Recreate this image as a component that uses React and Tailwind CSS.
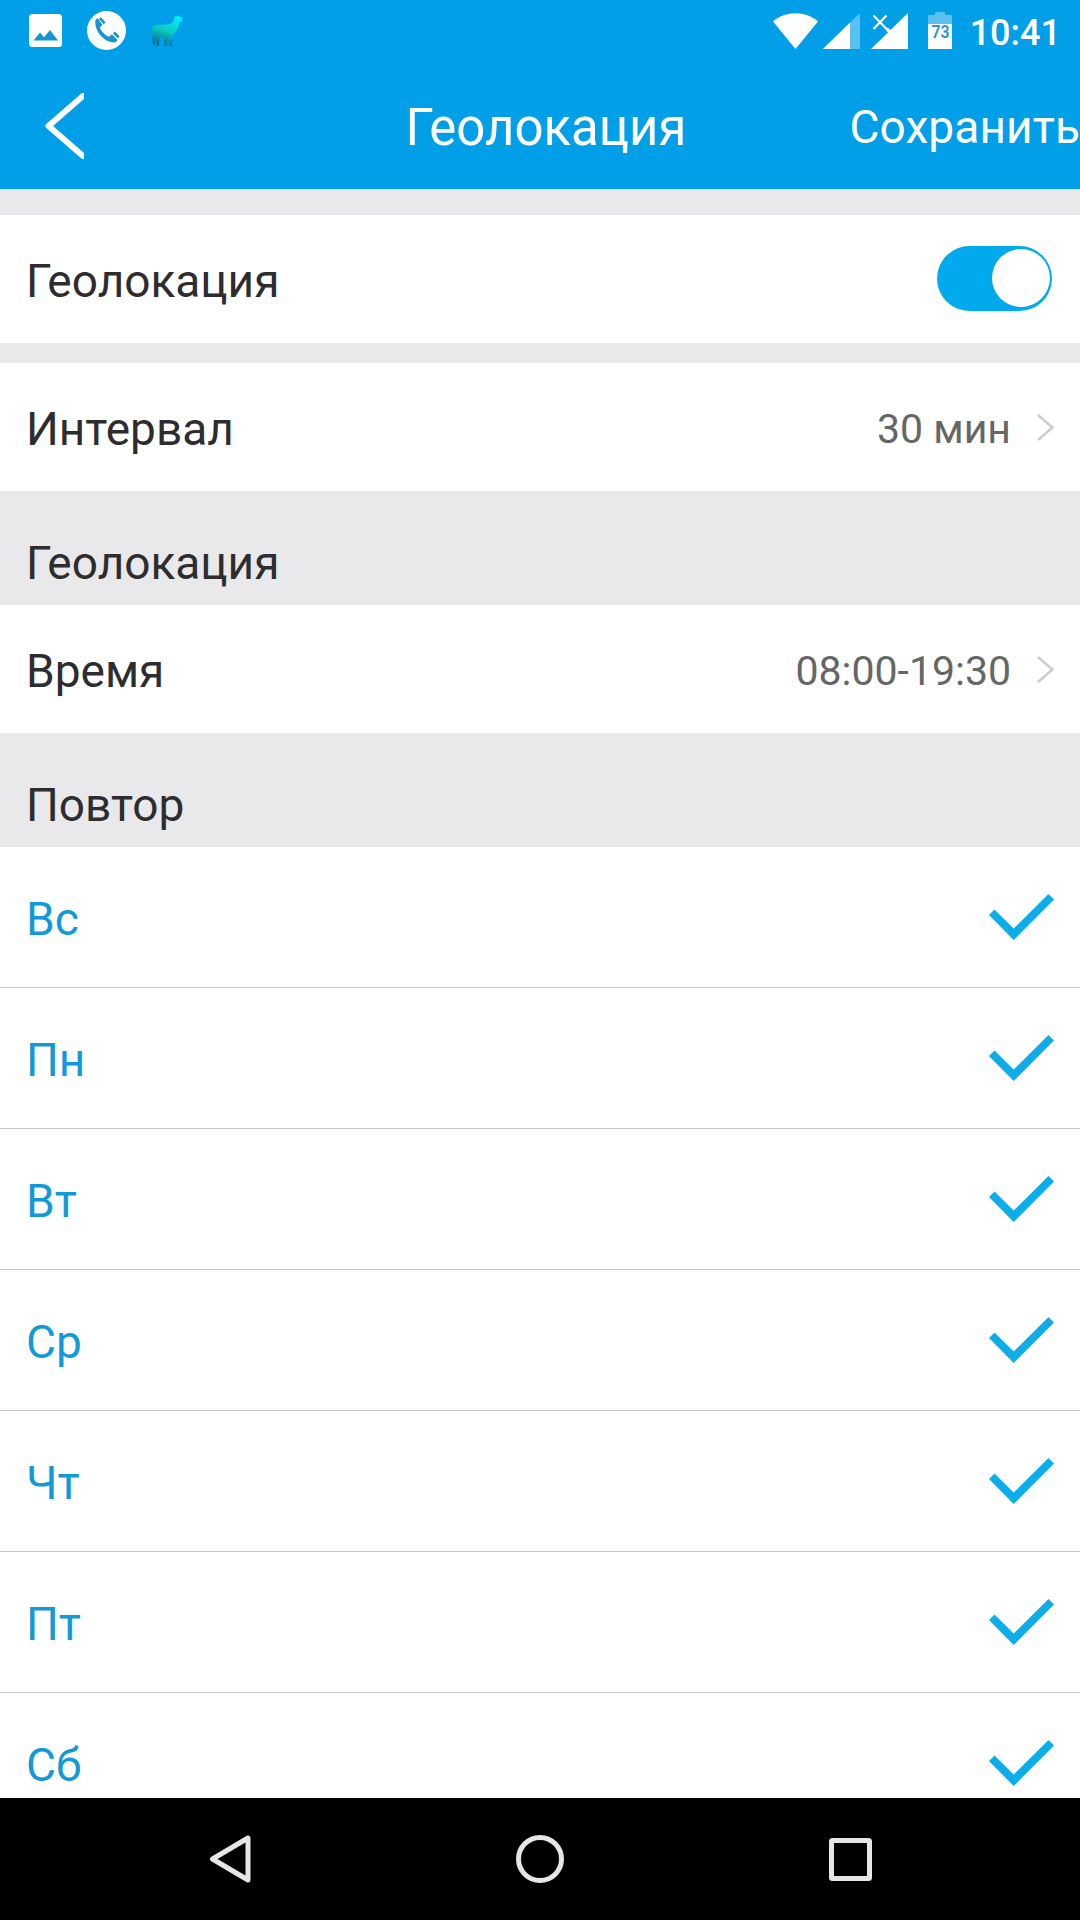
const DAYS = ["Вс", "Пн", "Вт", "Ср", "Чт", "Пт", "Сб"];

function StatusBar() {
  return (
    <div className="flex h-[61px] items-center justify-between pr-[19px] pl-[29px]">
      <div className="flex h-full items-center">
        <svg width="33" height="33" viewBox="0 0 33 33">
          <rect width="33" height="33" rx="3.5" fill="#fff" />
          <path d="M4.5 26.5 11 18.5 15 23.2 21 16 29 26.5Z" fill="#1794d2" />
        </svg>
        <svg className="ml-[25px]" width="39" height="39" viewBox="0 0 38 38">
          <circle cx="19" cy="19" r="19" fill="#fff" />
          <path
            d="M8 10.500c0-2 1.200-3 2.500-3.500l4.500 6.500-2.500 2.500c1.500 4 5 7.500 9 9l2.700-2.300 5.500 5.300c-.700 1.700-2 2.700-3.700 2.700C16.500 30 8 20.500 8 10.500Z"
            fill="#1794d2"
          />
          <path d="m11.500 7.500 2-1.300 4.500 4.800-1.700 2ZM25.200 21.700l2-1.700 4.500 4.500-1.500 2.200Z" fill="#1794d2" />
        </svg>
        <svg className="ml-[25px]" width="33" height="32" viewBox="0 0 33 32">
          <defs>
            <linearGradient id="llama" x1="0.800" y1="0" x2="0.500" y2="1">
              <stop offset="0" stopColor="#00f0ff" />
              <stop offset="0.550" stopColor="#0cc9c0" />
              <stop offset="1" stopColor="#08709d" />
            </linearGradient>
          </defs>
          <path
            d="M24 1.500 25.500.500l1 1 1.500-1 1 1.500 2.500.500v4l-3 .500c-.500 5-1.500 8.500-6 12l-1.500 2 .500 10h-3l-1.500-8-1 8h-3l.500-9H9l-1 9H5.500L4.500 23 4 30H2l-.500-11C0 16 .500 11.500 4 10.500c4-1 11.500-.500 15-1.500C22 8.500 23 5 24 1.500Z"
            fill="url(#llama)"
          />
        </svg>
      </div>
      <div className="flex h-full items-center">
        <svg width="45" height="36" viewBox="0 0 45 36">
          <path d="M22.500 36 0 8.500C12-2.500 33-2.500 45 8.500Z" fill="#fff" />
        </svg>
        <svg className="ml-[5px]" width="37" height="36" viewBox="0 0 37 36">
          <path d="M0 36 37 0V36Z" fill="#fff" opacity="0.350" />
          <path d="M0 36 27 9.500V36Z" fill="#fff" />
        </svg>
        <svg className="ml-[11px]" width="37" height="36" viewBox="0 0 37 36">
          <path d="M0 36 17 19.500 14.500 16.500 17 14.500 19.500 17 37 0V36Z" fill="#fff" />
          <path d="M2.500 2.500 15.500 16M15.500 2.500 2.500 16" stroke="#fff" strokeWidth="2.200" />
        </svg>
        <svg className="ml-5" width="24" height="37" viewBox="0 0 24 37">
          <path d="M7 0h10v3h7v9H0V3h7Z" fill="#fff" opacity="0.350" />
          <path d="M0 12h24v25H0Z" fill="#fff" />
          <text
            x="12.500"
            y="25.500"
            textAnchor="middle"
            fontSize="18"
            fontWeight="600"
            fill="#2a93d0"
            fontFamily="Roboto, sans-serif"
            textLength="18"
            lengthAdjust="spacingAndGlyphs"
          >
            73
          </text>
        </svg>
        <span className="mt-[5px] ml-[18px] text-[36px] leading-none font-medium">10:41</span>
      </div>
    </div>
  );
}

function Header() {
  return (
    <header className="relative flex h-32 items-center justify-between pl-[45px]">
      <svg className="mt-px" width="39" height="66" viewBox="0 0 39 66" fill="none">
        <path d="M38 3 3.500 33 38 63" stroke="#fff" strokeWidth="6" strokeLinejoin="round" strokeLinecap="round" />
      </svg>
      <h1 className="absolute inset-x-0 top-[37px] pl-[12px] text-center text-[51px] leading-[60px]">Геолокация</h1>
      <button className="mt-[4px] text-[46px] leading-[54px] tracking-[0.1px]">Сохранить</button>
    </header>
  );
}

function Row({ label, children }) {
  return (
    <div className="flex h-32 shrink-0 items-center justify-between bg-white pr-[26px] pl-[26px]">
      <span className="mt-[4px]">{label}</span>
      {children}
    </div>
  );
}

function Value({ text }) {
  return (
    <div className="flex items-center text-[41px] text-[#666]">
      <span className="mt-[6px]">{text}</span>
      <svg className="ml-[26px]" width="17" height="27" viewBox="0 0 17 27" fill="none">
        <path d="M1 1 15.500 13.500 1 26" stroke="#ccc" strokeWidth="2.500" />
      </svg>
    </div>
  );
}

function Section({ title }) {
  return <div className="flex h-[114px] shrink-0 items-end pb-[15px] pl-[26px] leading-[54px]">{title}</div>;
}

function Day({ name }) {
  return (
    <div className="flex h-[141px] shrink-0 items-center justify-between border-b border-[#c8c8ca] bg-white px-[26px] text-[#1199d8]">
      <span className="mt-[4px]">{name}</span>
      <svg width="65" height="46" viewBox="0 0 65 46">
        <path d="M0 21 5.500 15.500 24.700 34.500 59.500 0 65 5.500 24.700 46Z" fill="#0dade9" />
      </svg>
    </div>
  );
}

function NavBar() {
  return (
    <nav className="flex h-[122px] shrink-0 items-center justify-between bg-black px-[208px]">
      <svg width="43" height="50" viewBox="0 0 43 50" fill="none" stroke="#e6e6e6" strokeWidth="5" strokeLinejoin="round">
        <path d="M40 4V46L4.500 25Z" />
      </svg>
      <svg width="50" height="50" viewBox="0 0 50 50" fill="none">
        <circle cx="25" cy="25" r="21.500" stroke="#e6e6e6" strokeWidth="5" />
      </svg>
      <svg width="43" height="43" viewBox="0 0 43 43" fill="none">
        <rect x="2.500" y="2.500" width="38" height="38" rx="1" stroke="#e6e6e6" strokeWidth="5" />
      </svg>
    </nav>
  );
}

export default function App() {
  return (
    <div className="flex h-[1920px] w-[1080px] flex-col overflow-hidden bg-[#e9e9eb] font-['Roboto',sans-serif] text-[46px] text-[#2d2d2f]">
      <div className="h-[189px] shrink-0 bg-[#009fe8] text-white">
        <StatusBar />
        <Header />
      </div>
      <main className="flex h-[1609px] shrink-0 flex-col overflow-hidden pt-[26px]">
        <Row label="Геолокация">
          <div className="mr-0.5 mb-0.5 flex h-[65px] w-[115px] items-center justify-end rounded-full bg-[#00aaec] pr-[2px]">
            <div className="size-[58px] rounded-full bg-white" />
          </div>
        </Row>
        <div className="mt-5 shrink-0">
          <Row label="Интервал">
            <Value text="30 мин" />
          </Row>
        </div>
        <Section title="Геолокация" />
        <Row label="Время">
          <Value text="08:00-19:30" />
        </Row>
        <Section title="Повтор" />
        {DAYS.map((name) => (
          <Day key={name} name={name} />
        ))}
      </main>
      <NavBar />
    </div>
  );
}
